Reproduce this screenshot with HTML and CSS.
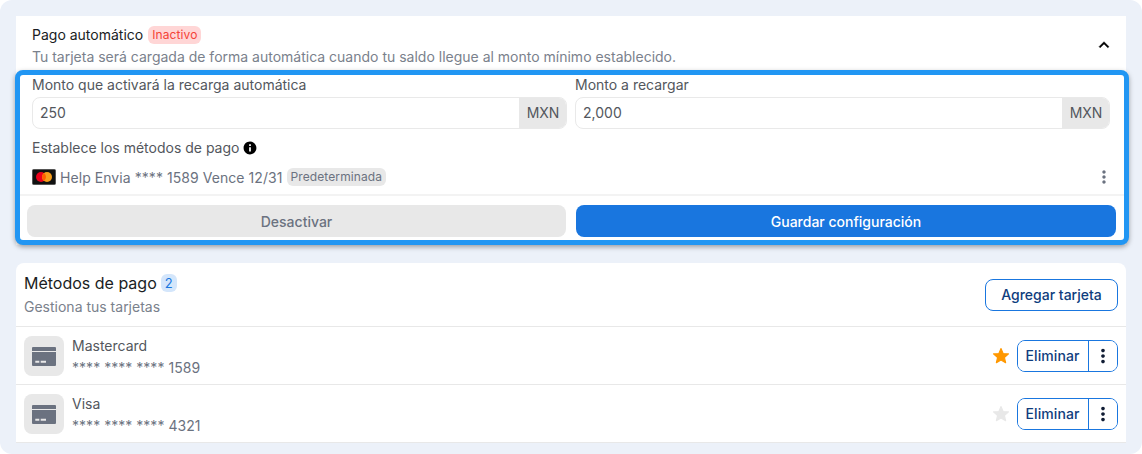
FILE: index.html
```html
<!DOCTYPE html>
<html lang="es">
<head>
<meta charset="utf-8">
<title>Pago automático</title>
<link rel="stylesheet" href="styles.css">
</head>
<body>
<div class="shell">
  <section class="auto-card">
    <header class="auto-head">
      <div class="auto-head-text">
        <div class="auto-title"><span>Pago automático</span><span class="badge-red">Inactivo</span></div>
        <div class="auto-sub">Tu tarjeta será cargada de forma automática cuando tu saldo llegue al monto mínimo establecido.</div>
      </div>
      <svg class="chevron" width="20" height="20" viewBox="0 0 24 24"><path d="M7.41 15.41 12 10.83l4.59 4.58L18 14l-6-6-6 6z" fill="#000" stroke="#000" stroke-width=".5"/></svg>
    </header>
    <div class="highlight">
      <div class="fields">
        <label class="field">
          <span class="field-label">Monto que activará la recarga automática</span>
          <span class="input"><span class="input-value">250</span><span class="input-suffix">MXN</span></span>
        </label>
        <label class="field">
          <span class="field-label">Monto a recargar</span>
          <span class="input"><span class="input-value">2,000</span><span class="input-suffix">MXN</span></span>
        </label>
      </div>
      <div class="methods-label">
        <span>Establece los métodos de pago</span>
        <svg width="14" height="14" viewBox="0 0 24 24"><path d="M12 1C5.900 1 1 5.900 1 12s4.900 11 11 11 11-4.900 11-11S18.100 1 12 1zm1.500 17h-3v-7.500h3V18zm0-9.500h-3v-3h3v3z" fill="#000"/></svg>
      </div>
      <div class="method-row">
        <svg class="mc" width="24" height="16" viewBox="0 0 24 16"><rect x=".5" y=".5" width="23" height="15" rx="1" fill="#111" stroke="#555"/><circle cx="9" cy="8" r="5" fill="#eb001b"/><circle cx="15" cy="8" r="5" fill="#f79e1b"/><path d="M12 4a5 5 0 0 1 0 8 5 5 0 0 1 0-8z" fill="#ff5f00"/></svg>
        <span class="method-text">Help Envia **** 1589 Vence 12/31</span>
        <span class="badge-grey">Predeterminada</span>
        <svg class="method-dots" width="20" height="20" viewBox="0 0 24 24"><path d="M12 8c1.100 0 2-.9 2-2s-.9-2-2-2-2 .9-2 2 .9 2 2 2zm0 2c-1.100 0-2 .9-2 2s.9 2 2 2 2-.9 2-2-.9-2-2-2zm0 6c-1.100 0-2 .9-2 2s.9 2 2 2 2-.9 2-2-.9-2-2-2z" fill="#6b7280"/></svg>
      </div>
      <div class="actions">
        <button class="btn btn-muted" type="button">Desactivar</button>
        <button class="btn btn-primary" type="button">Guardar configuración</button>
      </div>
    </div>
  </section>

  <section class="methods-card">
    <header class="methods-head">
      <div>
        <div class="methods-title"><span>Métodos de pago</span><span class="badge-blue">2</span></div>
        <div class="methods-sub">Gestiona tus tarjetas</div>
      </div>
      <button class="btn-outline" type="button">Agregar tarjeta</button>
    </header>
    <div class="card-row">
      <span class="card-icon"><svg width="24" height="24" viewBox="0 0 24 24"><path d="M1 3h22a1 1 0 0 1 1 1v3H0V4a1 1 0 0 1 1-1zM0 8h24v13a1 1 0 0 1-1 1H1a1 1 0 0 1-1-1zM3.300 16.700v2h4v-2zm5.400 0v2H14v-2z" fill-rule="evenodd" fill="#6b7280"/></svg></span>
      <div class="card-info"><div class="card-name">Mastercard</div><div class="card-num">**** **** **** 1589</div></div>
      <svg class="star" width="18" height="18" viewBox="0 0 24 24"><path d="M12 17.270 18.180 21l-1.640-7.030L22 9.240l-7.190-.61L12 2 9.190 8.630 2 9.240l5.460 4.730L5.820 21z" fill="#ff9800" stroke="#ff9800" stroke-width="1.500" stroke-linejoin="round"/></svg>
      <div class="btn-group"><button class="group-main" type="button">Eliminar</button><button class="group-more" type="button"><svg width="22" height="22" viewBox="0 0 24 24"><path d="M12 8c1.100 0 2-.9 2-2s-.9-2-2-2-2 .9-2 2 .9 2 2 2zm0 2c-1.100 0-2 .9-2 2s.9 2 2 2 2-.9 2-2-.9-2-2-2zm0 6c-1.100 0-2 .9-2 2s.9 2 2 2 2-.9 2-2-.9-2-2-2z" fill="#111d35"/></svg></button></div>
    </div>
    <div class="card-row">
      <span class="card-icon"><svg width="24" height="24" viewBox="0 0 24 24"><path d="M1 3h22a1 1 0 0 1 1 1v3H0V4a1 1 0 0 1 1-1zM0 8h24v13a1 1 0 0 1-1 1H1a1 1 0 0 1-1-1zM3.300 16.700v2h4v-2zm5.400 0v2H14v-2z" fill-rule="evenodd" fill="#6b7280"/></svg></span>
      <div class="card-info"><div class="card-name">Visa</div><div class="card-num">**** **** **** 4321</div></div>
      <svg class="star" width="18" height="18" viewBox="0 0 24 24"><path d="M12 17.270 18.180 21l-1.640-7.030L22 9.240l-7.190-.61L12 2 9.190 8.630 2 9.240l5.460 4.730L5.820 21z" fill="#e8e8e8" stroke="#e8e8e8" stroke-width="1.500" stroke-linejoin="round"/></svg>
      <div class="btn-group"><button class="group-main" type="button">Eliminar</button><button class="group-more" type="button"><svg width="22" height="22" viewBox="0 0 24 24"><path d="M12 8c1.100 0 2-.9 2-2s-.9-2-2-2-2 .9-2 2 .9 2 2 2zm0 2c-1.100 0-2 .9-2 2s.9 2 2 2 2-.9 2-2-.9-2-2-2zm0 6c-1.100 0-2 .9-2 2s.9 2 2 2 2-.9 2-2-.9-2-2-2z" fill="#111d35"/></svg></button></div>
    </div>
  </section>
</div>
</body>
</html>
```
FILE: styles.css
```css
* { box-sizing: border-box; }
html, body { margin: 0; height: 100%; background: #fff; }
body { font-family: Inter, "Liberation Sans", sans-serif; font-size: 14px; color: #53575d; overflow: hidden; }
button { font-family: inherit; }
svg { display: block; flex: none; }

.shell {
  width: 1142px; height: 454px; background: #ecf1f9; border-radius: 12px;
  padding: 16px; display: flex; flex-direction: column; gap: 18px;
}

.auto-card { background: #fff; display: flex; flex-direction: column; height: 229px; }
.auto-head { height: 54px; padding: 9px 16px 0; display: flex; justify-content: space-between; }
.auto-head-text { display: flex; flex-direction: column; gap: 2px; }
.auto-title { display: flex; align-items: center; gap: 5px; height: 20px; color: #1a1d23; line-height: 20px; }
.badge-red { background: #ffd6d6; color: #f44336; font-size: 12px; line-height: 18px; padding: 0 4px; border-radius: 6px; letter-spacing: .1px; }
.auto-sub { color: #7a818c; line-height: 20px; }
.chevron { margin: 10px -4px 0 0; }

.highlight {
  margin: 0 -3px 0 -1px; height: 175px; border: 5px solid #2196f3; border-radius: 8px;
  background: #fff; box-shadow: 0 2px 5px rgba(0,0,0,.35); display: flex; flex-direction: column;
  position: relative;
}
.fields { display: flex; gap: 8px; padding: 0 14px 0 12px; }
.field { flex: 1; display: flex; flex-direction: column; min-width: 0; }
.field-label { line-height: 20px; margin-bottom: 2px; }
.input { height: 32px; display: flex; border: 1px solid #e9e9e9; border-radius: 8px; overflow: hidden; }
.input-value { flex: 1; padding-left: 7px; line-height: 30px; }
.input-suffix { width: 48px; margin: -1px; background: #e8e8e8; text-align: center; line-height: 32px; }
.methods-label { display: flex; align-items: center; gap: 4px; padding: 9px 12px 0; height: 29px; line-height: 20px; }
.method-row { display: flex; align-items: center; height: 32px; margin-top: 3px; padding: 0 12px; color: #6b7280; }
.mc { margin-right: 4px; }
.method-text { color: #6b7280; letter-spacing: .06px; }
.badge-grey { background: #e8e8e8; margin-left: 4px; font-size: 12px; line-height: 18px; padding: 0 4px; border-radius: 6px; letter-spacing: .1px; }
.method-dots { margin-left: auto; margin-right: -2px; }
.actions { display: grid; grid-template-columns: 539px 540px; gap: 10px; padding: 9px 8px 0 7px; border-top: 2px solid #f3f3f3; margin-top: 1px; }
.btn { height: 32px; border: 0; border-radius: 8px; font-size: 14px; font-weight: 500; }
.btn-muted { background: #e8e8e8; color: #6b7280; }
.btn-primary { background: #1976df; color: #fff; }

.methods-card { background: #fff; border-radius: 8px 8px 0 0; height: 180px; border-bottom: 1px solid #e8e8e8; }
.methods-head { height: 64px; padding: 0 8px 2px; border-bottom: 1px solid #e8e8e8; display: flex; align-items: center; justify-content: space-between; }
.methods-title { display: flex; align-items: center; gap: 4px; font-size: 16px; color: #1a1d23; line-height: 24px; }
.badge-blue { background: #d4e6fb; color: #1976df; font-size: 13px; line-height: 18px; padding: 0 4px; border-radius: 6px; }
.methods-sub { color: #7a818c; line-height: 20px; margin-top: 2px; }
.btn-outline { width: 133px; height: 32px; margin-top: 2px; background: #fff; border: 1px solid #1976df; border-radius: 8px; color: #0f3d7d; font-size: 14px; font-weight: 500; }
.card-row { height: 58px; padding: 0 8px; border-bottom: 1px solid #e8e8e8; display: flex; align-items: center; }
.card-row:last-child { border-bottom: 0; height: 57px; }
.card-icon { width: 40px; height: 40px; background: #e8e8e8; border-radius: 8px; display: flex; align-items: center; justify-content: center; }
.card-info { margin-left: 8px; flex: 1; padding-top: 2px; }
.card-name { line-height: 20px; }
.card-num { line-height: 20px; margin-top: 2px; color: #6b7280; letter-spacing: .03px; }
.star { margin-right: 7px; }
.btn-group { width: 101px; height: 32px; border: 1px solid #1976df; border-radius: 8px; display: flex; overflow: hidden; }
.group-main { width: 71px; border: 0; border-right: 1px solid #1976df; background: #fff; color: #0f3d7d; font-size: 14px; font-weight: 500; padding: 0 1px 0 0; letter-spacing: .1px; }
.group-more { flex: 1; border: 0; background: #fff; padding: 0; display: flex; align-items: center; justify-content: center; }
```
